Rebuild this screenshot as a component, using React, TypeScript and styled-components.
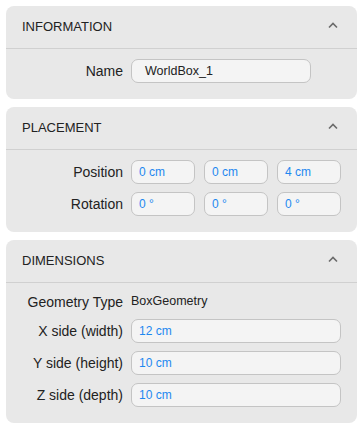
import styled, { createGlobalStyle } from 'styled-components';

const GlobalStyle = createGlobalStyle`
  body {
    margin: 0;
    background: #ffffff;
    font-family: 'Liberation Sans', Arial, sans-serif;
    color: #222;
  }
`;

function Chevron() {
  return (
    <svg width='10' height='7' viewBox='0 0 10 7'>
      <path d='M1 5.5 L5 1.5 L9 5.5' fill='none' stroke='#6a6a6a' strokeWidth='1.6' />
    </svg>
  );
}

interface PanelProps {
  title: string;
  children: React.ReactNode;
}

function Panel(props: PanelProps) {
  const { title, children } = props;
  return (
    <Section>
      <Header>
        <Title>{title}</Title>
        <Toggle>
          <Chevron />
        </Toggle>
      </Header>
      <Body>{children}</Body>
    </Section>
  );
}

export default function App() {
  return (
    <>
      <GlobalStyle />
      <Page>
        <Panel title='INFORMATION'>
          <Label>Name</Label>
          <NameInput>WorldBox_1</NameInput>
        </Panel>
        <Panel title='PLACEMENT'>
          <Label>Position</Label>
          <Triple>
            <Field>0 cm</Field>
            <Field>0 cm</Field>
            <Field>4 cm</Field>
          </Triple>
          <Label>Rotation</Label>
          <Triple>
            <Field>0 °</Field>
            <Field>0 °</Field>
            <Field>0 °</Field>
          </Triple>
        </Panel>
        <Panel title='DIMENSIONS'>
          <Label $short>Geometry Type</Label>
          <Plain>BoxGeometry</Plain>
          <Label>X side (width)</Label>
          <Field>12 cm</Field>
          <Label>Y side (height)</Label>
          <Field>10 cm</Field>
          <Label>Z side (depth)</Label>
          <Field>10 cm</Field>
        </Panel>
      </Page>
    </>
  );
}

const Page = styled.div`
  display: flex;
  flex-direction: column;
  gap: 8px;
  padding: 6px;
`;

const Section = styled.div`
  background: #e8e8e8;
  border-radius: 8px;
`;

const Header = styled.div`
  height: 42px;
  display: flex;
  align-items: center;
  justify-content: space-between;
  padding: 0 16px;
  border-bottom: 1px solid #d0d0d0;
`;

const Title = styled.span`
  font-size: 13px;
  color: #222;
  margin-top: -2px;
`;

const Toggle = styled.span`
  width: 16px;
  display: flex;
  justify-content: center;
  margin-top: -4px;
`;

const Body = styled.div`
  display: grid;
  grid-template-columns: 101px 1fr;
  column-gap: 8px;
  row-gap: 8px;
  align-items: center;
  padding: 10px 16px 16px;
`;

const Label = styled.div<{ $short?: boolean }>`
  font-size: 14px;
  color: #222;
  text-align: right;
  white-space: nowrap;
  line-height: ${({ $short }) => ($short ? '18px' : '24px')};
`;

const Field = styled.div`
  height: 22px;
  border: 1px solid #c4c4c4;
  border-radius: 7px;
  background: #f4f4f4;
  padding: 0 7px;
  font-size: 12px;
  line-height: 22px;
  color: #1e88f0;
  white-space: nowrap;
`;

const NameInput = styled(Field)`
  width: 165px;
  padding: 0 0 0 13px;
  font-size: 12.5px;
  color: #222;
`;

const Triple = styled.div`
  display: grid;
  grid-template-columns: repeat(3, 1fr);
  column-gap: 9px;
`;

const Plain = styled.div`
  font-size: 12.5px;
  color: #222;
  line-height: 18px;
  margin-top: -2px;
`;
